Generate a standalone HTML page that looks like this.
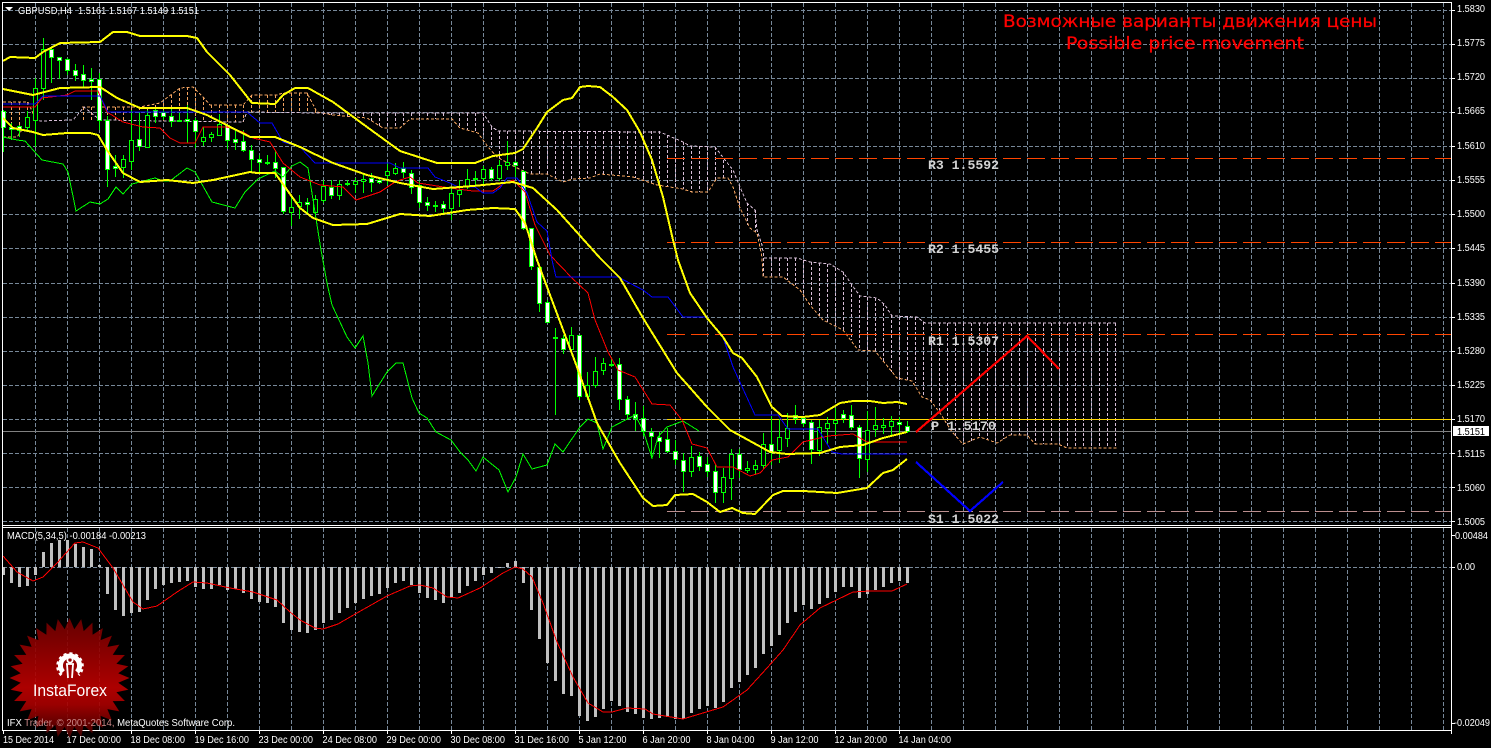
<!DOCTYPE html>
<html>
<head>
<meta charset="utf-8">
<title>GBPUSD,H4</title>
<style>
html,body{margin:0;padding:0;background:#000;width:1491px;height:748px;overflow:hidden}
svg{display:block}
text{font-family:"Liberation Sans","DejaVu Sans",sans-serif;font-size:10px;fill:#fff}
.c{shape-rendering:crispEdges;fill:none}
.lab{font-family:"Liberation Mono","DejaVu Sans Mono",monospace;font-size:13px;font-weight:bold;fill:#d4d4d4}
.ttl{font-family:"DejaVu Sans","Liberation Sans",sans-serif;font-size:17px;fill:#f00;stroke:#f00;stroke-width:.25}
</style>
</head>
<body>
<svg width="1491" height="748" viewBox="0 0 1491 748" xmlns="http://www.w3.org/2000/svg">
<rect width="1491" height="748" fill="#000"/>

<!-- grid -->
<path class="c" stroke="#778899" stroke-dasharray="4 2" d="M35.5 3V525M67.5 3V525M99.5 3V525M131.5 3V525M163.5 3V525M195.5 3V525M227.5 3V525M259.5 3V525M291.5 3V525M323.5 3V525M355.5 3V525M387.5 3V525M419.5 3V525M451.5 3V525M483.5 3V525M515.5 3V525M547.5 3V525M579.5 3V525M611.5 3V525M643.5 3V525M675.5 3V525M707.5 3V525M739.5 3V525M771.5 3V525M803.5 3V525M835.5 3V525M867.5 3V525M899.5 3V525M931.5 3V525M963.5 3V525M995.5 3V525M1027.5 3V525M1059.5 3V525M1091.5 3V525M1123.5 3V525M1155.5 3V525M1187.5 3V525M1219.5 3V525M1251.5 3V525M1283.5 3V525M1315.5 3V525M1347.5 3V525M1379.5 3V525M1411.5 3V525M1443.5 3V525
M35.5 528V730M67.5 528V730M99.5 528V730M131.5 528V730M163.5 528V730M195.5 528V730M227.5 528V730M259.5 528V730M291.5 528V730M323.5 528V730M355.5 528V730M387.5 528V730M419.5 528V730M451.5 528V730M483.5 528V730M515.5 528V730M547.5 528V730M579.5 528V730M611.5 528V730M643.5 528V730M675.5 528V730M707.5 528V730M739.5 528V730M771.5 528V730M803.5 528V730M835.5 528V730M867.5 528V730M899.5 528V730M931.5 528V730M963.5 528V730M995.5 528V730M1027.5 528V730M1059.5 528V730M1091.5 528V730M1123.5 528V730M1155.5 528V730M1187.5 528V730M1219.5 528V730M1251.5 528V730M1283.5 528V730M1315.5 528V730M1347.5 528V730M1379.5 528V730M1411.5 528V730M1443.5 528V730
M3 10.5H1451M3 44.5H1451M3 78.5H1451M3 112.5H1451M3 146.5H1451M3 180.5H1451M3 214.5H1451M3 248.5H1451M3 283.5H1451M3 317.5H1451M3 351.5H1451M3 385.5H1451M3 419.5H1451M3 453.5H1451M3 487.5H1451M3 521.5H1451M3 567.5H1451"/>

<!-- cloud hatching -->
<path class="c" stroke="#f4a460" stroke-dasharray="3 2" d="M11.5 102V137M19.5 102V137M27.5 102V130M35.5 102V118M83.5 107V120M91.5 107V120M99.5 107V120M107.5 107V120M115.5 107V120M123.5 107V120M131.5 107V120M139.5 107V120M147.5 107V120M155.5 105V121M163.5 103V121M171.5 95V121M179.5 88V121M187.5 87V121M195.5 88V121M203.5 97V121M211.5 105V121M219.5 105V122M227.5 105V122M235.5 105V122M243.5 105V122M251.5 95V112M259.5 95V112M267.5 95V112M275.5 95V112M283.5 93V113M291.5 93V113M299.5 93V113M307.5 93V113M315.5 110V113"/>
<path class="c" stroke="#d8bfd8" stroke-dasharray="3 2" d="M323.5 113V115M331.5 113V115M339.5 113V116M347.5 113V117M355.5 113V117M363.5 113V118M371.5 113V121M379.5 113V126M387.5 113V128M395.5 113V128M403.5 113V124M411.5 113V119M419.5 113V119M427.5 113V119M435.5 113V119M443.5 113V119M451.5 113V119M459.5 113V127M467.5 113V130M475.5 113V132M483.5 113V135M491.5 127V148M499.5 131V158M507.5 131V163M515.5 131V167M523.5 131V171M531.5 131V174M539.5 131V174M547.5 131V174M555.5 131V178M563.5 131V182M571.5 131V180M579.5 131V178M587.5 131V178M595.5 131V175M603.5 131V174M611.5 131V175M619.5 131V176M627.5 131V177M635.5 131V178M643.5 131V180M651.5 131V183M659.5 131V185M667.5 135V186M675.5 139V188M683.5 142V189M691.5 146V192M699.5 146V192M707.5 147V192M715.5 147V180M723.5 160V178M731.5 170V180M739.5 187V205M747.5 203V225M755.5 210V232M763.5 258V277M771.5 258V277M779.5 258V277M787.5 258V280M795.5 258V285M803.5 260V297M811.5 262V306M819.5 263V317M827.5 264V322M835.5 268V327M843.5 272V332M851.5 284V340M859.5 295V350M867.5 297V351M875.5 298V351M883.5 303V362M891.5 315V372M899.5 317V380M907.5 317V381M915.5 317V383M923.5 322V397M931.5 323V401M939.5 323V412M947.5 323V425M955.5 323V437M963.5 323V444M971.5 323V441M979.5 323V437M987.5 323V440M995.5 323V443M1003.5 323V439M1011.5 323V435M1019.5 323V435M1027.5 323V435M1035.5 323V444M1043.5 323V444M1051.5 323V444M1059.5 323V444M1067.5 323V448M1075.5 323V448M1083.5 323V448M1091.5 323V448M1099.5 323V448M1107.5 323V448M1115.5 323V448"/>
<!-- cloud spans -->
<polyline class="c" stroke="#f4a460" stroke-dasharray="3 2" points="3,102 28,102 35,118"/>
<polyline class="c" stroke="#f4a460" stroke-dasharray="3 2" points="3,137 17,137 22,130"/>
<polyline class="c" stroke="#f4a460" stroke-dasharray="3 2" points="82,107 140,107 160,103 180,88 193,87 203,97 210,105 243,105 252,95 277,95 283,93 307,93 317,112 333,115 367,118 383,128 400,128 410,119 452,119 460,128 478,133 488,147 497,157 515,167 530,174 547,174 563,182 573,179 590,178 600,174 633,177 657,185 683,189 692,192 708,192 717,178 728,178 733,187 740,208 750,228 757,233 762,257 763,277 783,277 800,290 810,305 823,320 843,330 858,350 875,351 897,378 912,381 922,397 930,400 940,413 952,432 963,444 980,437 997,443 1010,435 1027,435 1035,444 1058,444 1067,448 1117,448"/>
<polyline class="c" stroke="#d8bfd8" stroke-dasharray="3 2" points="35,118 40,121 73,120 80,112 84,107 100,120 167,121 243,122 247,112 317,113 483,113 492,127 498,131 660,132 667,135 683,142 690,146 715,147 725,160 733,170 740,187 747,203 755,210 757,230 762,245 764,258 797,258 810,262 830,264 843,272 852,285 860,296 877,298 885,305 892,316 917,317 925,323 1117,323"/>

<!-- pivot levels -->
<path class="c" stroke="#ff4500" stroke-dasharray="18 6" d="M667 158.5H1451M667 242.5H1451M667 334.5H1451"/>
<path class="c" stroke="#bc8f8f" stroke-dasharray="18 6" d="M667 511.5H1451"/>
<path class="c" stroke="#ffd700" d="M667 419.5H1451"/>
<path class="c" stroke="#808080" d="M3 431.5H1451"/>

<!-- wicks -->
<path class="c" stroke="#00ff00" d="M3.5 110V152M11.5 123V140M19.5 125V137M27.5 111V130M35.5 78V147M43.5 38V100M51.5 47V83M59.5 57V79M67.5 58V75M75.5 64V81M83.5 65V88M91.5 68V100M99.5 73V130M107.5 116V187M115.5 155V177M123.5 155V178M131.5 110V170M139.5 112V151M147.5 110V148M155.5 107V123M163.5 110V120M171.5 107V127M179.5 112V121M187.5 105V143M195.5 118V148M203.5 127V146M211.5 132V142M219.5 114V135M227.5 124V149M235.5 129V150M243.5 130V152M251.5 145V172M259.5 155V172M267.5 155V165M275.5 150V178M283.5 167V214M291.5 197V226M299.5 195V219M307.5 198V214M315.5 195V214M323.5 180V203M331.5 180V199M339.5 180V200M347.5 180V186M355.5 178V193M363.5 173V193M371.5 173V192M379.5 177V184M387.5 163V185M395.5 163V175M403.5 162V178M411.5 170V194M419.5 181V208M427.5 197V211M435.5 201V212M443.5 201V213M451.5 187V220M459.5 180V207M467.5 169V189M475.5 171V186M483.5 166V186M491.5 167V181M499.5 160V181M507.5 141V170M515.5 161V178M523.5 170V230M531.5 228V270M539.5 267V312M547.5 300V322M555.5 328V415M563.5 335V354M571.5 327V350M579.5 335V400M587.5 372V400M595.5 357V388M603.5 358V375M611.5 357V367M619.5 358V410M627.5 396V420M635.5 402V431M643.5 406V436M651.5 428V458M659.5 432V458M667.5 428V453M675.5 440V465M683.5 453V492M691.5 446V477M699.5 452V471M707.5 457V477M715.5 464V503M723.5 468V503M731.5 449V500M739.5 449V478M747.5 461V473M755.5 460V474M763.5 433V469M771.5 416V465M779.5 419V463M787.5 413V447M795.5 405V424M803.5 417V427M811.5 420V464M819.5 420V456M827.5 417V445M835.5 408V435M843.5 410V423M851.5 405V430M859.5 425V478M867.5 411V472M875.5 407V437M883.5 418V434M891.5 416V437M899.5 417V434M907.5 421V433"/>
<!-- bear bodies -->
<path class="c" style="fill:#fff" stroke="#00ff00" d="M1.5 111.5h4v16h-4zM9.5 127.5h4v2h-4zM17.5 126.5h4v4h-4zM49.5 49.5h4v8h-4zM57.5 57.5h4v3h-4zM65.5 59.5h4v11h-4zM73.5 70.5h4v5h-4zM81.5 74.5h4v6h-4zM89.5 79.5h4v2h-4zM97.5 79.5h4v41h-4zM105.5 120.5h4v49h-4zM113.5 166.5h4v2h-4zM137.5 139.5h4v7h-4zM153.5 110.5h4v6h-4zM161.5 112.5h4v4h-4zM169.5 116.5h4v5h-4zM177.5 120.5h4v1h-4zM185.5 119.5h4v2h-4zM193.5 120.5h4v11h-4zM225.5 125.5h4v15h-4zM233.5 139.5h4v3h-4zM241.5 141.5h4v9h-4zM249.5 150.5h4v9h-4zM257.5 159.5h4v3h-4zM265.5 162.5h4v1h-4zM273.5 162.5h4v6h-4zM281.5 167.5h4v44h-4zM305.5 202.5h4v2h-4zM329.5 187.5h4v8h-4zM345.5 183.5h4v1h-4zM369.5 178.5h4v4h-4zM377.5 180.5h4v2h-4zM401.5 168.5h4v4h-4zM409.5 173.5h4v14h-4zM417.5 185.5h4v17h-4zM425.5 202.5h4v3h-4zM433.5 205.5h4v1h-4zM441.5 204.5h4v4h-4zM473.5 178.5h4v1h-4zM489.5 169.5h4v9h-4zM513.5 162.5h4v3h-4zM521.5 171.5h4v57h-4zM529.5 228.5h4v38h-4zM537.5 267.5h4v36h-4zM545.5 302.5h4v20h-4zM553.5 337.5h4v1h-4zM561.5 338.5h4v11h-4zM577.5 335.5h4v61h-4zM609.5 364.5h4v1h-4zM617.5 364.5h4v35h-4zM625.5 399.5h4v15h-4zM633.5 414.5h4v4h-4zM641.5 418.5h4v13h-4zM649.5 432.5h4v4h-4zM657.5 437.5h4v4h-4zM665.5 439.5h4v12h-4zM673.5 451.5h4v8h-4zM681.5 460.5h4v11h-4zM697.5 456.5h4v10h-4zM705.5 464.5h4v7h-4zM713.5 471.5h4v21h-4zM737.5 454.5h4v15h-4zM769.5 444.5h4v8h-4zM793.5 415.5h4v3h-4zM801.5 418.5h4v5h-4zM809.5 422.5h4v27h-4zM841.5 414.5h4v4h-4zM849.5 415.5h4v12h-4zM857.5 427.5h4v31h-4zM897.5 422.5h4v2h-4zM905.5 426.5h4v5h-4z"/>
<!-- bull bodies -->
<path class="c" style="fill:#000" stroke="#00ff00" d="M25.5 117.5h4v10h-4zM33.5 88.5h4v32h-4zM41.5 49.5h4v39h-4zM121.5 159.5h4v8h-4zM129.5 140.5h4v21h-4zM145.5 115.5h4v32h-4zM201.5 137.5h4v4h-4zM209.5 134.5h4v3h-4zM217.5 124.5h4v11h-4zM289.5 207.5h4v5h-4zM297.5 202.5h4v4h-4zM313.5 199.5h4v13h-4zM321.5 186.5h4v14h-4zM337.5 184.5h4v11h-4zM353.5 181.5h4v3h-4zM361.5 179.5h4v2h-4zM385.5 171.5h4v4h-4zM393.5 168.5h4v5h-4zM449.5 193.5h4v15h-4zM457.5 190.5h4v4h-4zM465.5 179.5h4v7h-4zM481.5 169.5h4v9h-4zM497.5 165.5h4v13h-4zM505.5 162.5h4v3h-4zM569.5 335.5h4v14h-4zM585.5 385.5h4v11h-4zM593.5 371.5h4v14h-4zM601.5 363.5h4v7h-4zM689.5 457.5h4v14h-4zM721.5 477.5h4v15h-4zM729.5 454.5h4v24h-4zM745.5 468.5h4v2h-4zM753.5 465.5h4v4h-4zM761.5 444.5h4v21h-4zM777.5 437.5h4v13h-4zM785.5 428.5h4v10h-4zM817.5 427.5h4v23h-4zM825.5 423.5h4v5h-4zM833.5 420.5h4v3h-4zM865.5 430.5h4v29h-4zM873.5 425.5h4v4h-4zM881.5 425.5h4v2h-4zM889.5 421.5h4v5h-4z"/>

<!-- chikou -->
<polyline class="c" stroke="#00ff00" points="3,137 17,140 25,141 42,160 63,164 68,172 76,211 90,202 100,204 108,199 116,187 123,194 132,184 155,178 163,181 170,181 187,168 195,172 212,202 235,208 245,192 258,179 275,171 283,177 292,166 300,162 308,168 321,250 327,283 332,305 347,337 355,348 363,336 368,363 372,396 387,372 396,363 403,363 412,398 419,413 427,418 436,432 451,440 460,452 468,460 476,471 483,457 499,470 508,492 516,477 523,454 532,469 547,465 555,444 563,452 580,427 588,419 597,423 603,449 612,427 635,415 643,430 652,458 658,437 667,427 683,421 699,431"/>
<!-- kijun (red) -->
<polyline class="c" stroke="#ff0000" points="3,107 35,107 42,98 67,95 75,91 98,91 107,112 123,122 143,127 160,128 170,138 180,143 195,143 203,127 227,127 243,132 253,138 270,142 283,163 300,177 320,185 343,187 356,200 380,192 395,182 400,180 410,177 418,183 450,188 473,191 493,191 503,184 513,180 525,192 535,225 550,255 572,278 588,293 595,320 608,352 618,370 635,377 652,404 670,405 682,420 692,444 707,448 717,467 733,467 750,476 760,473 772,460 788,457 803,442 828,436 853,434 867,442 907,442"/>
<!-- tenkan (blue) -->
<polyline class="c" stroke="#0000ff" points="3,104 35,104 43,96 100,96 108,112 247,112 260,123 272,123 283,142 300,147 315,163 390,163 400,168 428,168 435,177 450,183 458,187 475,187 483,193 493,193 500,188 507,178 517,178 527,193 537,222 547,231 552,260 556,277 618,277 643,290 652,297 668,297 683,317 707,317 723,337 733,367 755,415 778,415 788,429 818,429 832,452 842,454 907,454"/>
<!-- bollinger -->
<g stroke="#ffff00" stroke-width="2" stroke-linejoin="round" fill="none" style="shape-rendering:crispEdges">
<polyline points="3,61 10,57 35,58 43,52 60,43 100,42 113,32 127,32 140,36 187,36 197,38 207,52 230,75 252,103 275,104 283,95 295,88 308,88 333,102 367,127 400,151 437,163 475,163 493,156 515,153 523,149 537,128 547,112 563,100 572,98 580,87 588,86 600,87 613,97 627,110 640,132 652,160 663,197 673,240 678,260 690,293 707,318 723,337 733,353 742,358 757,377 772,407 782,416 803,417 820,415 840,403 853,401 870,401 883,403 897,402 907,404"/>
<polyline points="3,89 33,95 60,88 100,87 117,98 140,108 187,108 207,115 250,137 275,137 300,147 333,163 367,175 400,183 433,189 473,186 513,182 533,188 557,210 600,258 620,278 643,318 677,373 707,407 730,430 770,452 787,454 820,453 840,447 863,445 883,438 907,432"/>
<polyline points="3,118 13,128 33,132 43,135 67,133 90,133 98,135 107,150 123,173 140,182 167,180 193,183 213,180 250,172 257,173 275,173 300,208 313,218 333,225 367,224 400,214 430,216 467,210 493,208 515,209 525,223 537,260 553,303 577,367 597,423 620,463 643,498 653,506 667,505 675,495 693,494 707,502 720,512 732,508 743,513 755,514 773,495 783,491 803,491 837,493 867,488 883,473 893,470 907,459"/>
</g>
<!-- forecast -->
<polyline class="c" stroke="#ff0000" stroke-width="2.2" points="916,432 1027,336 1059,369"/>
<polyline class="c" stroke="#0000ff" stroke-width="2.2" points="916,462 970,511 1003,482"/>

<!-- MACD histogram -->
<path class="c" stroke="#c0c0c0" stroke-width="3" d="M3.5 567V575M11.5 567V583M19.5 567V587M27.5 567V586M35.5 567V575M43.5 567V552M51.5 567V543M59.5 567V540M67.5 567V540M75.5 567V544M83.5 567V547M91.5 567V549M99.5 567V565M107.5 567V594M115.5 567V610M123.5 567V616M131.5 567V613M139.5 567V612M147.5 567V600M155.5 567V589M163.5 567V585M171.5 567V583M179.5 567V582M187.5 567V581M195.5 567V587M203.5 567V589M211.5 567V589M219.5 567V585M227.5 567V590M235.5 567V589M243.5 567V593M251.5 567V599M259.5 567V602M267.5 567V603M275.5 567V607M283.5 567V623M291.5 567V630M299.5 567V632M307.5 567V633M315.5 567V630M323.5 567V623M331.5 567V620M339.5 567V613M347.5 567V608M355.5 567V603M363.5 567V599M371.5 567V596M379.5 567V594M387.5 567V588M395.5 567V583M403.5 567V581M411.5 567V585M419.5 567V593M427.5 567V598M435.5 567V600M443.5 567V603M451.5 567V598M459.5 567V593M467.5 567V586M475.5 567V581M483.5 567V575M491.5 567V573M499.5 567V568M507.5 567V563M515.5 567V561M523.5 567V583M531.5 567V610M539.5 567V639M547.5 567V663M555.5 567V681M563.5 567V694M571.5 567V696M579.5 567V716M587.5 567V721M595.5 567V717M603.5 567V709M611.5 567V701M619.5 567V706M627.5 567V712M635.5 567V714M643.5 567V718M651.5 567V719M659.5 567V718M667.5 567V717M675.5 567V719M683.5 567V719M691.5 567V713M699.5 567V709M707.5 567V706M715.5 567V708M723.5 567V702M731.5 567V688M739.5 567V682M747.5 567V675M755.5 567V668M763.5 567V654M771.5 567V646M779.5 567V635M787.5 567V623M795.5 567V612M803.5 567V605M811.5 567V609M819.5 567V604M827.5 567V598M835.5 567V592M843.5 567V587M851.5 567V587M859.5 567V598M867.5 567V594M875.5 567V590M883.5 567V587M891.5 567V583M899.5 567V581M907.5 567V583"/>
<!-- MACD signal -->
<polyline class="c" stroke="#ff0000" points="3,556 17,572 33,581 43,577 57,563 75,543 83,542 98,548 113,568 133,602 143,609 157,606 177,592 193,582 207,583 230,588 253,592 277,600 290,612 300,620 315,628 323,629 338,624 357,613 387,596 410,586 420,585 433,588 447,597 458,598 480,588 503,573 515,567 523,569 532,577 543,603 557,642 573,677 588,703 603,712 612,712 627,708 645,709 653,714 683,719 703,713 723,707 747,690 767,668 783,650 800,625 820,608 853,592 870,591 892,591 907,584"/>

<!-- frame -->
<path class="c" stroke="#fff" d="M2.5 2V730.5M1451.5 2V734M2 2.5H1452M2 525.5H1452M2 527.5H1452M2 730.5H1452
M3.5 730V734M67.5 730V734M131.5 730V734M195.5 730V734M259.5 730V734M323.5 730V734M387.5 730V734M451.5 730V734M515.5 730V734M579.5 730V734M643.5 730V734M707.5 730V734M771.5 730V734M835.5 730V734M899.5 730V734
M1451 10.5h4M1451 44.5h4M1451 78.5h4M1451 112.5h4M1451 146.5h4M1451 180.5h4M1451 214.5h4M1451 248.5h4M1451 283.5h4M1451 317.5h4M1451 351.5h4M1451 385.5h4M1451 419.5h4M1451 453.5h4M1451 487.5h4M1451 521.5h4M1451 535.5h4M1451 567.5h4M1451 723.5h4"/>

<!-- header -->
<path d="M5 7h8l-4 4z" fill="#fff"/>
<text x="18" y="14" textLength="54" lengthAdjust="spacingAndGlyphs">GBPUSD,H4</text>
<text x="78" y="14" textLength="121" lengthAdjust="spacingAndGlyphs">1.5161 1.5167 1.5149 1.5151</text>

<!-- titles -->
<text class="ttl" x="1003" y="27" textLength="374" lengthAdjust="spacingAndGlyphs">Возможные варианты движения цены</text>
<text class="ttl" x="1066" y="49" textLength="238" lengthAdjust="spacingAndGlyphs">Possible price movement</text>

<!-- pivot labels -->
<text class="lab" x="928" y="169" textLength="71" lengthAdjust="spacingAndGlyphs">R3 1.5592</text>
<text class="lab" x="928" y="253" textLength="71" lengthAdjust="spacingAndGlyphs">R2 1.5455</text>
<text class="lab" x="928" y="345" textLength="71" lengthAdjust="spacingAndGlyphs">R1 1.5307</text>
<text class="lab" x="931" y="430" textLength="65" lengthAdjust="spacingAndGlyphs">P 1.5170</text>
<text class="lab" x="928" y="523" textLength="71" lengthAdjust="spacingAndGlyphs">S1 1.5022</text>

<!-- price axis -->
<g>
<text x="1457" y="12" textLength="28" lengthAdjust="spacingAndGlyphs">1.5830</text>
<text x="1457" y="46" textLength="28" lengthAdjust="spacingAndGlyphs">1.5775</text>
<text x="1457" y="80" textLength="28" lengthAdjust="spacingAndGlyphs">1.5720</text>
<text x="1457" y="114" textLength="28" lengthAdjust="spacingAndGlyphs">1.5665</text>
<text x="1457" y="149" textLength="28" lengthAdjust="spacingAndGlyphs">1.5610</text>
<text x="1457" y="183" textLength="28" lengthAdjust="spacingAndGlyphs">1.5555</text>
<text x="1457" y="217" textLength="28" lengthAdjust="spacingAndGlyphs">1.5500</text>
<text x="1457" y="251" textLength="28" lengthAdjust="spacingAndGlyphs">1.5445</text>
<text x="1457" y="286" textLength="28" lengthAdjust="spacingAndGlyphs">1.5390</text>
<text x="1457" y="320" textLength="28" lengthAdjust="spacingAndGlyphs">1.5335</text>
<text x="1457" y="354" textLength="28" lengthAdjust="spacingAndGlyphs">1.5280</text>
<text x="1457" y="388" textLength="28" lengthAdjust="spacingAndGlyphs">1.5225</text>
<text x="1457" y="422" textLength="28" lengthAdjust="spacingAndGlyphs">1.5170</text>
<text x="1457" y="457" textLength="28" lengthAdjust="spacingAndGlyphs">1.5115</text>
<text x="1457" y="491" textLength="28" lengthAdjust="spacingAndGlyphs">1.5060</text>
<text x="1457" y="525" textLength="28" lengthAdjust="spacingAndGlyphs">1.5005</text>
<text x="1455" y="539" textLength="33" lengthAdjust="spacingAndGlyphs">0.00484</text>
<text x="1457" y="570" textLength="18" lengthAdjust="spacingAndGlyphs">0.00</text>
<text x="1454" y="726" textLength="36" lengthAdjust="spacingAndGlyphs">-0.02049</text>
</g>
<rect x="1453" y="426" width="36" height="10" fill="#fff"/>
<text x="1457" y="435" textLength="28" lengthAdjust="spacingAndGlyphs" style="fill:#000">1.5151</text>

<!-- MACD labels -->
<text x="7" y="539" textLength="139" lengthAdjust="spacingAndGlyphs">MACD(5,34,5) -0.00184 -0.00213</text>

<!-- time axis -->
<g>
<text x="3" y="743" textLength="51" lengthAdjust="spacingAndGlyphs">15 Dec 2014</text>
<text x="66.5" y="743" textLength="54.5" lengthAdjust="spacingAndGlyphs">17 Dec 00:00</text>
<text x="130.5" y="743" textLength="54.5" lengthAdjust="spacingAndGlyphs">18 Dec 08:00</text>
<text x="194.5" y="743" textLength="54.5" lengthAdjust="spacingAndGlyphs">19 Dec 16:00</text>
<text x="258.5" y="743" textLength="54.5" lengthAdjust="spacingAndGlyphs">23 Dec 00:00</text>
<text x="322.5" y="743" textLength="54.5" lengthAdjust="spacingAndGlyphs">24 Dec 08:00</text>
<text x="386.5" y="743" textLength="54.5" lengthAdjust="spacingAndGlyphs">29 Dec 00:00</text>
<text x="450.5" y="743" textLength="54.5" lengthAdjust="spacingAndGlyphs">30 Dec 08:00</text>
<text x="514.5" y="743" textLength="54.5" lengthAdjust="spacingAndGlyphs">31 Dec 16:00</text>
<text x="578.5" y="743" textLength="48" lengthAdjust="spacingAndGlyphs">5 Jan 12:00</text>
<text x="642.5" y="743" textLength="48" lengthAdjust="spacingAndGlyphs">6 Jan 20:00</text>
<text x="706.5" y="743" textLength="48" lengthAdjust="spacingAndGlyphs">8 Jan 04:00</text>
<text x="770.5" y="743" textLength="48" lengthAdjust="spacingAndGlyphs">9 Jan 12:00</text>
<text x="834.5" y="743" textLength="52.5" lengthAdjust="spacingAndGlyphs">12 Jan 20:00</text>
<text x="898.5" y="743" textLength="52.5" lengthAdjust="spacingAndGlyphs">14 Jan 04:00</text>
</g>

<!-- InstaForex logo -->
<defs>
<linearGradient id="lg" gradientUnits="userSpaceOnUse" x1="0" y1="618" x2="0" y2="738">
<stop offset="0" stop-color="#6e0000"/>
<stop offset=".3" stop-color="#960000"/>
<stop offset=".58" stop-color="#bb0000"/>
<stop offset=".72" stop-color="#a80000"/>
<stop offset=".88" stop-color="#6a0000"/>
<stop offset="1" stop-color="#4a0000"/>
</linearGradient>
</defs>
<polygon fill="url(#lg)" opacity=".92" transform="translate(69.5 0)" points="60,678 48.76,682.8 58.85,689.71 46.89,692.22 55.43,700.96 43.21,701.1 49.89,711.33 37.88,709.09 42.43,720.43 31.09,715.88 33.33,727.89 23.1,721.21 22.96,733.43 14.22,724.89 11.71,736.85 4.8,726.76 0,738 -4.8,726.76 -11.71,736.85 -14.22,724.89 -22.96,733.43 -23.1,721.21 -33.33,727.89 -31.09,715.88 -42.43,720.43 -37.88,709.09 -49.89,711.33 -43.21,701.1 -55.43,700.96 -46.89,692.22 -58.85,689.71 -48.76,682.8 -60,678 -48.76,673.2 -58.85,666.29 -46.89,663.78 -55.43,655.04 -43.21,654.9 -49.89,644.67 -37.88,646.91 -42.43,635.57 -31.09,640.12 -33.33,628.11 -23.1,634.79 -22.96,622.57 -14.22,631.11 -11.71,619.15 -4.8,629.24 0,618 4.8,629.24 11.71,619.15 14.22,631.11 22.96,622.57 23.1,634.79 33.33,628.11 31.09,640.12 42.43,635.57 37.88,646.91 49.89,644.67 43.21,654.9 55.43,655.04 46.89,663.78 58.85,666.29 48.76,673.2"/>
<text x="7" y="726" textLength="228" lengthAdjust="spacingAndGlyphs">IFX <tspan style="fill:#c88">Trader, © 2001-2014,</tspan> MetaQuotes Software Corp.</text>
<g fill="none" stroke="#fff">
<path d="M63 672A9.55 9.55 0 1 1 77 672" stroke-width="5"/>
<path d="M61.5 675A12.3 12.3 0 1 1 78.5 675" stroke-width="3" stroke-dasharray="3 2.7"/>
<circle cx="70" cy="660" r="2.6" stroke-width="1.8"/>
<path d="M67 664L68 678M73 664L72 678M66 664H74" stroke-width="1.8"/>
</g>
<text x="33" y="696" textLength="74" lengthAdjust="spacingAndGlyphs" style="font-size:17px">InstaForex</text>
</svg>
</body>
</html>
